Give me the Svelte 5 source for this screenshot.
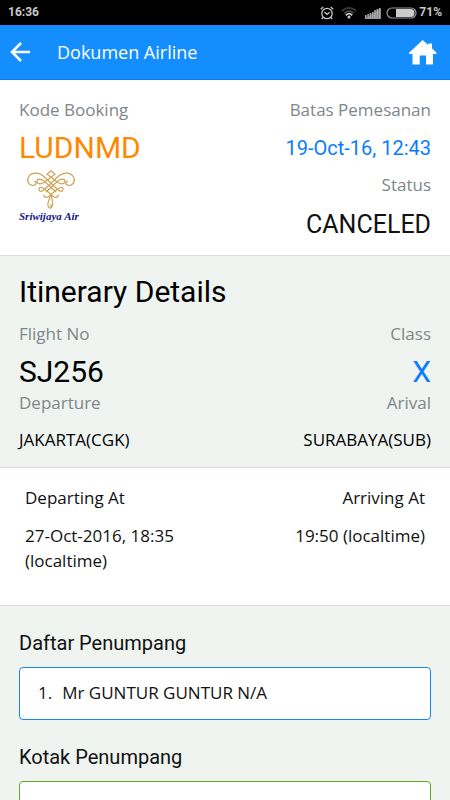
<script lang="ts">
  type Passenger = { title: string; name: string; ticket: string };

  const booking = {
    code: "LUDNMD",
    limit: "19-Oct-16, 12:43",
    status: "CANCELED",
  };

  const flight = {
    number: "SJ256",
    class: "X",
    from: "JAKARTA(CGK)",
    to: "SURABAYA(SUB)",
    departing: "27-Oct-2016, 18:35 (localtime)",
    arriving: "19:50 (localtime)",
  };

  const passengers: Passenger[] = [
    { title: "Mr", name: "GUNTUR GUNTUR", ticket: "N/A" },
  ];

  const signalBars = [3, 4, 5, 6, 8, 9, 10];
</script>

<div class="statusbar">
  <span>16:36</span>
  <div class="indicators">
    <svg width="14" height="14" viewBox="0 0 14 14" fill="none" stroke="#c4c4c4" stroke-width="1.3">
      <circle cx="7" cy="7.5" r="5.2" />
      <path d="M4.5 6 L7 8.5 L9.7 6.3 M.7 3.2 L3.3 1 M13.3 3.2 L10.7 1 M3 11.5 L1.8 13 M11 11.5 L12.2 13" />
    </svg>
    <svg class="wifi" width="16" height="13" viewBox="0 0 16 13" fill="none" stroke-width="1.8">
      <path d="M.8 5 Q8 -1.2 15.2 5" stroke="#3a3a3a" />
      <path d="M3.2 7.3 Q8 3 12.8 7.3" stroke="#4a4a4a" />
      <path d="M4.8 9.3 Q8 6 11.2 9.3" stroke="#ccc" />
      <circle cx="8" cy="11" r="1.5" fill="#ccc" />
    </svg>
    <svg class="signal" width="16" height="12" viewBox="0 0 16 12">
      <path d="M0 12 L16 1 V12Z" fill="#777" />
      {#each signalBars as h, i}
        <rect x={i * 2.3} y={12 - h - 1} width="1.6" height={h + 1} fill="#aaa" />
      {/each}
    </svg>
    <svg width="31" height="12" viewBox="0 0 31 12">
      <rect x="1" y="1" width="29" height="10" rx="5" fill="none" stroke="#999" stroke-width="1.2" />
      <path d="M10 2 H24.5 A4 4 0 0 1 24.5 10 H10Z" fill="#ccc" />
    </svg>
    <span class="percent">71%</span>
  </div>
</div>

<header>
  <button class="back" aria-label="Back">
    <svg width="20" height="20" viewBox="0 0 20 20" fill="none" stroke="#fff" stroke-width="2.6">
      <path d="M11 1 L2 10 L11 19 M2 10 H20" />
    </svg>
  </button>
  <h1>Dokumen Airline</h1>
  <a class="home" href="#home" aria-label="Home">
    <svg width="28" height="25" viewBox="0 0 28 25" fill="#fff">
      <path d="M13.7 0 L19.2 5 V3.5 H23 V8.3 L27.5 12.8 V14 H24 V24.5 H17 V15.5 H10.7 V24.5 H3.5 V14 H0 V12.8Z" />
    </svg>
  </a>
</header>

<main>
  <section class="white summary">
    <div>
      <p class="label">Kode Booking</p>
      <p class="big orange">{booking.code}</p>
      <svg class="logo" width="66" height="54" viewBox="0 0 66 54" role="img" aria-label="Sriwijaya Air">
        <g fill="none" stroke="#cda455" stroke-width="1.2">
          <path d="M14 15.5 C18 15 18 11 15 11.5 M14 15.5 C9 15 7.5 10 9.5 7 C13 1 21 2.5 26 7.5 L38 19 C41 22 44 22 44 19.3 C44 16.5 41 17 38 19.5 L29 27 C26 28 24 26 25 24.5" />
          <path d="M50 15.5 C46 15 46 11 49 11.5 M50 15.5 C55 15 56.5 10 54.5 7 C51 1 43 2.5 38 7.5 L26 19 C23 22 20 22 20 19.3 C20 16.5 23 17 26 19.5 L35 27 C38 28 40 26 39 24.5" />
          <path d="M32 .8 L36 4.3 L25 12.5 C21 15 18 13.5 18 11.2 C18 8.5 22 8.5 25 11 L37 22" />
          <path d="M32 .8 L28 4.3 L39 12.5 C43 15 46 13.5 46 11.2 C46 8.5 42 8.5 39 11 L27 22" />
          <path d="M32 25 C30 29 28.5 32 29 35.5 C29.5 39 33 39 33.5 35 C34 32 33 29 32 25 M31.5 38 C33 37 32 34 31 35" />
        </g>
        <text x="0" y="50">Sriwijaya Air</text>
      </svg>
    </div>
    <div class="right">
      <p class="label">Batas Pemesanan</p>
      <p class="limit blue">{booking.limit}</p>
      <p class="label">Status</p>
      <p class="status">{booking.status}</p>
    </div>
  </section>

  <section class="itinerary">
    <h2>Itinerary Details</h2>
    <div class="row">
      <div>
        <p class="label">Flight No</p>
        <p class="big">{flight.number}</p>
        <p class="label">Departure</p>
        <p class="city">{flight.from}</p>
      </div>
      <div class="right">
        <p class="label">Class</p>
        <p class="big blue">{flight.class}</p>
        <p class="label">Arival</p>
        <p class="city">{flight.to}</p>
      </div>
    </div>
  </section>

  <section class="white times">
    <div>
      <p>Departing At</p>
      <p>{flight.departing}</p>
    </div>
    <div class="right">
      <p>Arriving At</p>
      <p>{flight.arriving}</p>
    </div>
  </section>

  <section class="lists">
    <h3>Daftar Penumpang</h3>
    <ol class="box">
      {#each passengers as p}
        <li>{p.title} {p.name} {p.ticket}</li>
      {/each}
    </ol>
    <h3>Kotak Penumpang</h3>
    <div class="box green"></div>
  </section>
</main>

<style>
  :global(body) {
    background: #eff4f0;
    color: #111;
    font: 17px/25px "Open Sans", "Noto Sans", sans-serif;
  }

  :global(html) {
    scrollbar-width: none;
  }

  p,
  h1,
  h2,
  h3 {
    margin: 0;
    font-weight: 400;
  }

  .statusbar {
    display: flex;
    justify-content: space-between;
    align-items: center;
    height: 25px;
    padding: 0 8px;
    background: #000;
    color: #c8c8c8;
    font: 700 12px/25px Roboto, sans-serif;
  }

  .indicators {
    display: flex;
    align-items: center;
  }

  .wifi {
    margin-left: 7px;
  }

  .signal {
    margin: 0 5px 0 8px;
  }

  .percent {
    margin-left: 2px;
  }

  header {
    display: flex;
    align-items: center;
    box-sizing: border-box;
    height: 55px;
    padding: 0 13px 0 10px;
    background: #148eff;
    border-bottom: 1px solid #0c7cf0;
    color: #fff;
  }

  header svg {
    display: block;
  }

  .back {
    padding: 0;
    border: 0;
    background: none;
    cursor: pointer;
  }

  h1 {
    flex: 1;
    margin-left: 27px;
    font-size: 18px;
  }

  section {
    padding: 0 19px;
    border-bottom: 1px solid #dcdcdc;
  }

  .white {
    background: #fff;
  }

  .summary,
  .row,
  .times {
    display: flex;
    justify-content: space-between;
  }

  .right {
    text-align: right;
  }

  .label {
    color: #80868a;
  }

  .big {
    font: 30px/44px Roboto, sans-serif;
  }

  .orange {
    color: #ff8800;
  }

  .blue {
    color: #0a7cff;
  }

  .summary {
    padding-top: 17px;
    padding-bottom: 8px;
  }

  .summary .big {
    padding-top: 4px;
  }

  .logo {
    display: block;
  }

  .logo text {
    fill: #14148c;
    font: italic 700 11px "Liberation Serif", serif;
  }

  .limit {
    padding-top: 2px;
    font: 20px/48px Roboto, sans-serif;
  }

  .status {
    padding-top: 6px;
    font: 25px/44px Roboto, sans-serif;
  }

  .itinerary {
    padding-top: 16px;
    padding-bottom: 15px;
    color: #000;
  }

  h2 {
    padding-bottom: 9px;
    font: 30px/40px Roboto, sans-serif;
  }

  .row .big {
    padding-top: 8px;
    line-height: 36px;
  }

  .city {
    padding-top: 12px;
  }

  .times {
    padding: 17px 25px 32px;
  }

  .times div {
    width: 50%;
  }

  .times p + p {
    padding-top: 13px;
  }

  .lists {
    padding-top: 25px;
    border: 0;
  }

  h3 {
    font: 20px/24px Roboto, sans-serif;
  }

  .box {
    box-sizing: border-box;
    min-height: 53px;
    margin: 12px 0 25px;
    padding: 12px 18px;
    border: 1px solid #1a85e8;
    border-radius: 4px;
    background: #fff;
    list-style: none;
  }

  li {
    display: flex;
    gap: 10px;
    counter-increment: passenger;
  }

  li::before {
    content: counter(passenger) ".";
  }

  .green {
    border-color: #5cae1c;
  }
</style>
